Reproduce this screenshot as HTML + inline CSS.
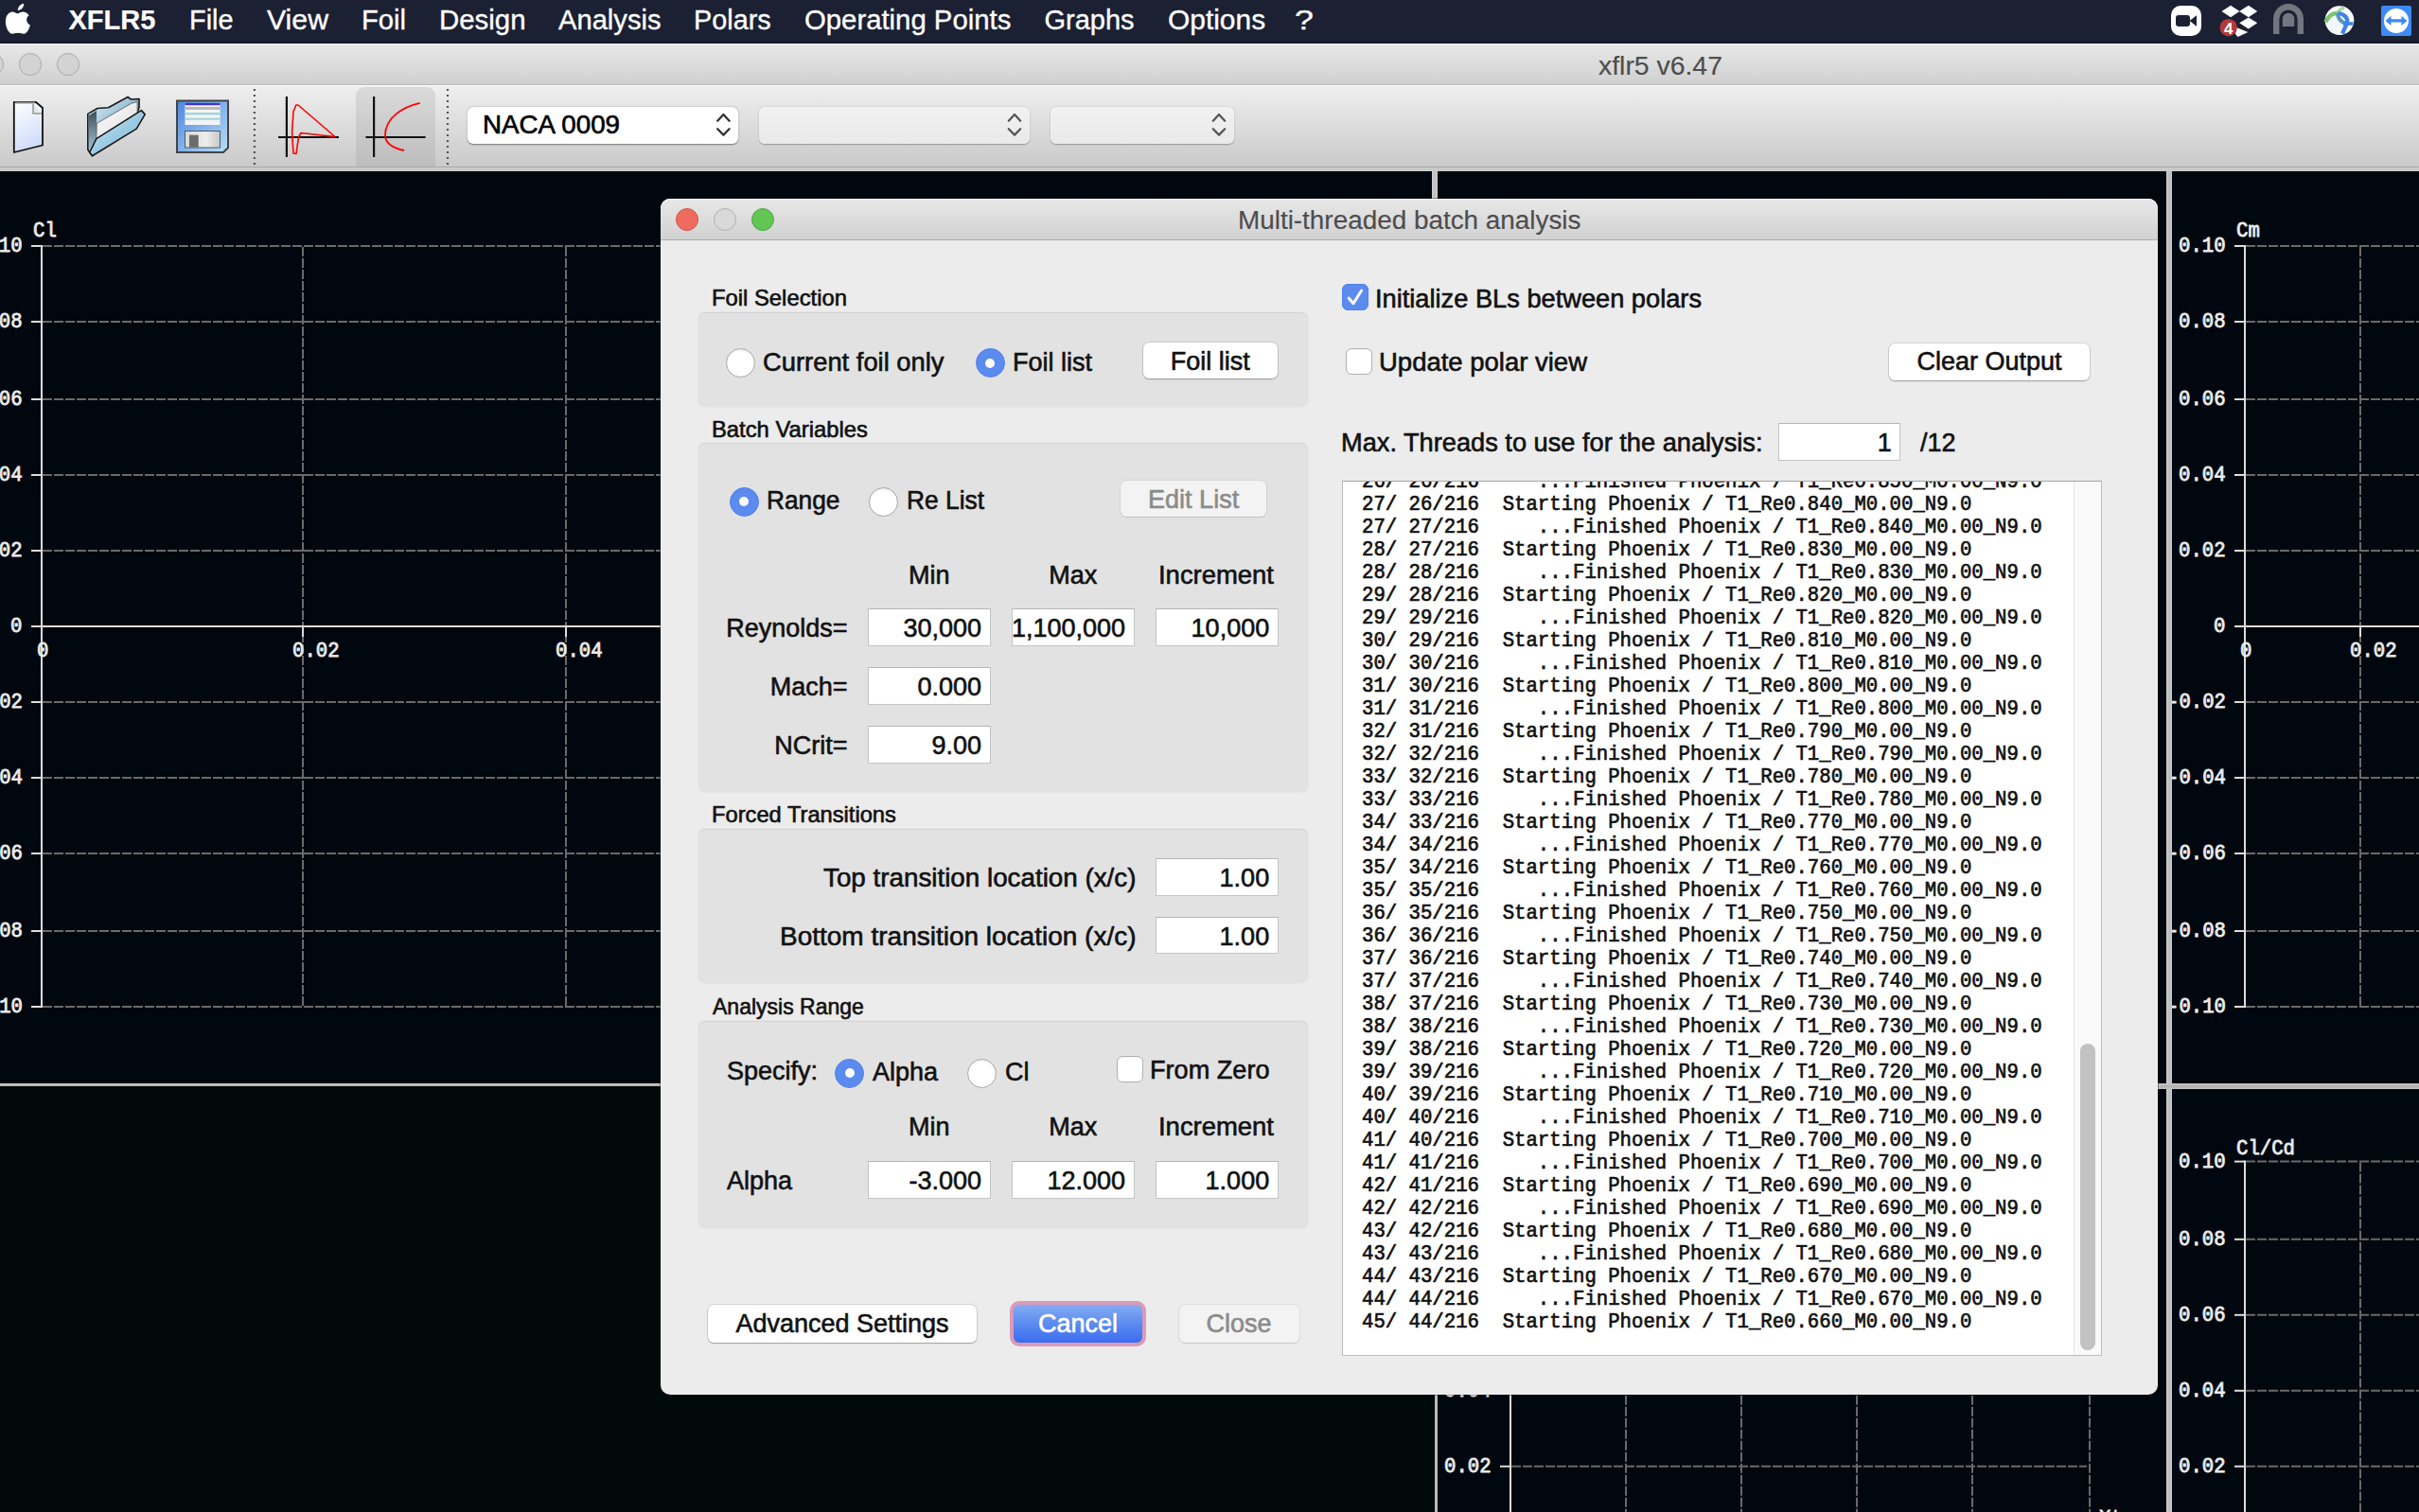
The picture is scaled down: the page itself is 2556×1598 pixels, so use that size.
<!DOCTYPE html>
<html><head><meta charset="utf-8"><title>xflr5</title>
<style>
html,body{margin:0;padding:0;}
body{width:2556px;height:1598px;overflow:hidden;position:relative;background:#01070e;font-family:"Liberation Sans",sans-serif;}
.t{position:absolute;white-space:pre;}
.r{position:absolute;box-sizing:border-box;}
svg{position:absolute;overflow:visible;}
</style></head><body>

<div class="r" style="left:0.0px;top:181.0px;width:1513.0px;height:964.0px;background:#01070e"></div>
<div class="r" style="left:1519.0px;top:181.0px;width:770.0px;height:964.0px;background:#01070e"></div>
<div class="r" style="left:2295.0px;top:181.0px;width:261.0px;height:964.0px;background:#01070e"></div>
<div class="r" style="left:0.0px;top:1148.0px;width:1516.0px;height:450.0px;background:#020909"></div>
<div class="r" style="left:1519.0px;top:1151.0px;width:770.0px;height:447.0px;background:#01070e"></div>
<div class="r" style="left:2295.0px;top:1151.0px;width:261.0px;height:447.0px;background:#01070e"></div>
<div class="r" style="left:0.0px;top:176.0px;width:2556.0px;height:5.0px;background:#c9c9c9"></div>
<div class="r" style="left:1513.0px;top:181.0px;width:6.0px;height:964.0px;background:linear-gradient(90deg,#d0d0d0,#c4c4c4 30%,#c4c4c4 70%,#d0d0d0)"></div>
<div class="r" style="left:2289.0px;top:181.0px;width:6.0px;height:1417.0px;background:linear-gradient(90deg,#d0d0d0,#c2c2c2 30%,#bdbdbd 70%,#cccccc)"></div>
<div class="r" style="left:0.0px;top:1145.0px;width:1513.0px;height:3.0px;background:linear-gradient(180deg,#d2d2d2,#b2b2b2 60%,#bababa)"></div>
<div class="r" style="left:1519.0px;top:1145.0px;width:1037.0px;height:6.0px;background:linear-gradient(180deg,#c8c8c8,#b0b0b0 50%,#c2c2c2)"></div>
<div class="r" style="left:1516.0px;top:1151.0px;width:3.0px;height:447.0px;background:linear-gradient(90deg,#a0a0a0,#c8c8c8,#a8a8a8)"></div>
<div class="r" style="left:0px;top:181px;width:1513px;height:964px;overflow:hidden">
<svg style="left:0px;top:-181px" width="2556" height="1598"><line x1="45.0" y1="260.0" x2="1513.0" y2="260.0" stroke="#6a6a6a" stroke-width="2" stroke-dasharray="10 2"/><line x1="45.0" y1="340.0" x2="1513.0" y2="340.0" stroke="#6a6a6a" stroke-width="2" stroke-dasharray="10 2"/><line x1="45.0" y1="422.0" x2="1513.0" y2="422.0" stroke="#6a6a6a" stroke-width="2" stroke-dasharray="10 2"/><line x1="45.0" y1="502.0" x2="1513.0" y2="502.0" stroke="#6a6a6a" stroke-width="2" stroke-dasharray="10 2"/><line x1="45.0" y1="582.0" x2="1513.0" y2="582.0" stroke="#6a6a6a" stroke-width="2" stroke-dasharray="10 2"/><line x1="45.0" y1="742.0" x2="1513.0" y2="742.0" stroke="#6a6a6a" stroke-width="2" stroke-dasharray="10 2"/><line x1="45.0" y1="822.0" x2="1513.0" y2="822.0" stroke="#6a6a6a" stroke-width="2" stroke-dasharray="10 2"/><line x1="45.0" y1="902.0" x2="1513.0" y2="902.0" stroke="#6a6a6a" stroke-width="2" stroke-dasharray="10 2"/><line x1="45.0" y1="984.0" x2="1513.0" y2="984.0" stroke="#6a6a6a" stroke-width="2" stroke-dasharray="10 2"/><line x1="45.0" y1="1064.0" x2="1513.0" y2="1064.0" stroke="#6a6a6a" stroke-width="2" stroke-dasharray="10 2"/><line x1="320.0" y1="261.0" x2="320.0" y2="1064.0" stroke="#6a6a6a" stroke-width="2" stroke-dasharray="10 2"/><line x1="598.0" y1="261.0" x2="598.0" y2="1064.0" stroke="#6a6a6a" stroke-width="2" stroke-dasharray="10 2"/><line x1="875.0" y1="261.0" x2="875.0" y2="1064.0" stroke="#6a6a6a" stroke-width="2" stroke-dasharray="10 2"/><line x1="1152.0" y1="261.0" x2="1152.0" y2="1064.0" stroke="#6a6a6a" stroke-width="2" stroke-dasharray="10 2"/><line x1="1429.0" y1="261.0" x2="1429.0" y2="1064.0" stroke="#6a6a6a" stroke-width="2" stroke-dasharray="10 2"/><line x1="33.0" y1="260.0" x2="44.0" y2="260.0" stroke="#dcdcdc" stroke-width="2"/><line x1="33.0" y1="340.0" x2="44.0" y2="340.0" stroke="#dcdcdc" stroke-width="2"/><line x1="33.0" y1="422.0" x2="44.0" y2="422.0" stroke="#dcdcdc" stroke-width="2"/><line x1="33.0" y1="502.0" x2="44.0" y2="502.0" stroke="#dcdcdc" stroke-width="2"/><line x1="33.0" y1="582.0" x2="44.0" y2="582.0" stroke="#dcdcdc" stroke-width="2"/><line x1="33.0" y1="662.0" x2="44.0" y2="662.0" stroke="#dcdcdc" stroke-width="2"/><line x1="33.0" y1="662.0" x2="1513.0" y2="662.0" stroke="#dcdcdc" stroke-width="2"/><line x1="320.0" y1="662.0" x2="320.0" y2="673.0" stroke="#dcdcdc" stroke-width="2"/><line x1="598.0" y1="662.0" x2="598.0" y2="673.0" stroke="#dcdcdc" stroke-width="2"/><line x1="875.0" y1="662.0" x2="875.0" y2="673.0" stroke="#dcdcdc" stroke-width="2"/><line x1="1152.0" y1="662.0" x2="1152.0" y2="673.0" stroke="#dcdcdc" stroke-width="2"/><line x1="1429.0" y1="662.0" x2="1429.0" y2="673.0" stroke="#dcdcdc" stroke-width="2"/><line x1="33.0" y1="742.0" x2="44.0" y2="742.0" stroke="#dcdcdc" stroke-width="2"/><line x1="33.0" y1="822.0" x2="44.0" y2="822.0" stroke="#dcdcdc" stroke-width="2"/><line x1="33.0" y1="902.0" x2="44.0" y2="902.0" stroke="#dcdcdc" stroke-width="2"/><line x1="33.0" y1="984.0" x2="44.0" y2="984.0" stroke="#dcdcdc" stroke-width="2"/><line x1="33.0" y1="1064.0" x2="44.0" y2="1064.0" stroke="#dcdcdc" stroke-width="2"/><line x1="44.0" y1="259.0" x2="44.0" y2="1065.0" stroke="#dcdcdc" stroke-width="2"/></svg>
<div class="t" style="left:-26.1px;top:69.3px;font-size:22.00px;line-height:22.00px;font-family:'Liberation Mono', monospace;font-weight:400;color:#ececec;-webkit-text-stroke:0.85px #ececec;transform:scaleX(0.9385);transform-origin:0 0;">0.10</div>
<div class="t" style="left:-26.1px;top:149.3px;font-size:22.00px;line-height:22.00px;font-family:'Liberation Mono', monospace;font-weight:400;color:#ececec;-webkit-text-stroke:0.85px #ececec;transform:scaleX(0.9385);transform-origin:0 0;">0.08</div>
<div class="t" style="left:-26.1px;top:231.3px;font-size:22.00px;line-height:22.00px;font-family:'Liberation Mono', monospace;font-weight:400;color:#ececec;-webkit-text-stroke:0.85px #ececec;transform:scaleX(0.9385);transform-origin:0 0;">0.06</div>
<div class="t" style="left:-26.1px;top:311.3px;font-size:22.00px;line-height:22.00px;font-family:'Liberation Mono', monospace;font-weight:400;color:#ececec;-webkit-text-stroke:0.85px #ececec;transform:scaleX(0.9385);transform-origin:0 0;">0.04</div>
<div class="t" style="left:-26.1px;top:391.3px;font-size:22.00px;line-height:22.00px;font-family:'Liberation Mono', monospace;font-weight:400;color:#ececec;-webkit-text-stroke:0.85px #ececec;transform:scaleX(0.9385);transform-origin:0 0;">0.02</div>
<div class="t" style="left:11.1px;top:471.3px;font-size:22.00px;line-height:22.00px;font-family:'Liberation Mono', monospace;font-weight:400;color:#ececec;-webkit-text-stroke:0.85px #ececec;transform:scaleX(0.9385);transform-origin:0 0;">0</div>
<div class="t" style="left:-38.5px;top:551.3px;font-size:22.00px;line-height:22.00px;font-family:'Liberation Mono', monospace;font-weight:400;color:#ececec;-webkit-text-stroke:0.85px #ececec;transform:scaleX(0.9385);transform-origin:0 0;">-0.02</div>
<div class="t" style="left:-38.5px;top:631.3px;font-size:22.00px;line-height:22.00px;font-family:'Liberation Mono', monospace;font-weight:400;color:#ececec;-webkit-text-stroke:0.85px #ececec;transform:scaleX(0.9385);transform-origin:0 0;">-0.04</div>
<div class="t" style="left:-38.5px;top:711.3px;font-size:22.00px;line-height:22.00px;font-family:'Liberation Mono', monospace;font-weight:400;color:#ececec;-webkit-text-stroke:0.85px #ececec;transform:scaleX(0.9385);transform-origin:0 0;">-0.06</div>
<div class="t" style="left:-38.5px;top:793.3px;font-size:22.00px;line-height:22.00px;font-family:'Liberation Mono', monospace;font-weight:400;color:#ececec;-webkit-text-stroke:0.85px #ececec;transform:scaleX(0.9385);transform-origin:0 0;">-0.08</div>
<div class="t" style="left:-38.5px;top:873.3px;font-size:22.00px;line-height:22.00px;font-family:'Liberation Mono', monospace;font-weight:400;color:#ececec;-webkit-text-stroke:0.85px #ececec;transform:scaleX(0.9385);transform-origin:0 0;">-0.10</div>
<div class="t" style="left:38.5px;top:496.9px;font-size:22.00px;line-height:22.00px;font-family:'Liberation Mono', monospace;font-weight:400;color:#ececec;-webkit-text-stroke:0.85px #ececec;transform:scaleX(0.9385);transform-origin:0 0;">0</div>
<div class="t" style="left:309.0px;top:496.9px;font-size:22.00px;line-height:22.00px;font-family:'Liberation Mono', monospace;font-weight:400;color:#ececec;-webkit-text-stroke:0.85px #ececec;transform:scaleX(0.9385);transform-origin:0 0;">0.02</div>
<div class="t" style="left:587.0px;top:496.9px;font-size:22.00px;line-height:22.00px;font-family:'Liberation Mono', monospace;font-weight:400;color:#ececec;-webkit-text-stroke:0.85px #ececec;transform:scaleX(0.9385);transform-origin:0 0;">0.04</div>
<div class="t" style="left:864.0px;top:496.9px;font-size:22.00px;line-height:22.00px;font-family:'Liberation Mono', monospace;font-weight:400;color:#ececec;-webkit-text-stroke:0.85px #ececec;transform:scaleX(0.9385);transform-origin:0 0;">0.06</div>
<div class="t" style="left:1141.0px;top:496.9px;font-size:22.00px;line-height:22.00px;font-family:'Liberation Mono', monospace;font-weight:400;color:#ececec;-webkit-text-stroke:0.85px #ececec;transform:scaleX(0.9385);transform-origin:0 0;">0.08</div>
<div class="t" style="left:1418.0px;top:496.9px;font-size:22.00px;line-height:22.00px;font-family:'Liberation Mono', monospace;font-weight:400;color:#ececec;-webkit-text-stroke:0.85px #ececec;transform:scaleX(0.9385);transform-origin:0 0;">0.10</div>
<div class="t" style="left:35.0px;top:52.9px;font-size:22.00px;line-height:22.00px;font-family:'Liberation Mono', monospace;font-weight:400;color:#ececec;-webkit-text-stroke:0.85px #ececec;transform:scaleX(0.9385);transform-origin:0 0;">Cl</div>
</div>
<div class="r" style="left:2295px;top:181px;width:261px;height:964px;overflow:hidden">
<svg style="left:-2295px;top:-181px" width="2556" height="1598"><line x1="2373.0" y1="260.0" x2="2556.0" y2="260.0" stroke="#6a6a6a" stroke-width="2" stroke-dasharray="10 2"/><line x1="2373.0" y1="340.0" x2="2556.0" y2="340.0" stroke="#6a6a6a" stroke-width="2" stroke-dasharray="10 2"/><line x1="2373.0" y1="422.0" x2="2556.0" y2="422.0" stroke="#6a6a6a" stroke-width="2" stroke-dasharray="10 2"/><line x1="2373.0" y1="502.0" x2="2556.0" y2="502.0" stroke="#6a6a6a" stroke-width="2" stroke-dasharray="10 2"/><line x1="2373.0" y1="582.0" x2="2556.0" y2="582.0" stroke="#6a6a6a" stroke-width="2" stroke-dasharray="10 2"/><line x1="2373.0" y1="742.0" x2="2556.0" y2="742.0" stroke="#6a6a6a" stroke-width="2" stroke-dasharray="10 2"/><line x1="2373.0" y1="822.0" x2="2556.0" y2="822.0" stroke="#6a6a6a" stroke-width="2" stroke-dasharray="10 2"/><line x1="2373.0" y1="902.0" x2="2556.0" y2="902.0" stroke="#6a6a6a" stroke-width="2" stroke-dasharray="10 2"/><line x1="2373.0" y1="984.0" x2="2556.0" y2="984.0" stroke="#6a6a6a" stroke-width="2" stroke-dasharray="10 2"/><line x1="2373.0" y1="1064.0" x2="2556.0" y2="1064.0" stroke="#6a6a6a" stroke-width="2" stroke-dasharray="10 2"/><line x1="2494.0" y1="261.0" x2="2494.0" y2="1064.0" stroke="#6a6a6a" stroke-width="2" stroke-dasharray="10 2"/><line x1="2361.0" y1="260.0" x2="2372.0" y2="260.0" stroke="#dcdcdc" stroke-width="2"/><line x1="2361.0" y1="340.0" x2="2372.0" y2="340.0" stroke="#dcdcdc" stroke-width="2"/><line x1="2361.0" y1="422.0" x2="2372.0" y2="422.0" stroke="#dcdcdc" stroke-width="2"/><line x1="2361.0" y1="502.0" x2="2372.0" y2="502.0" stroke="#dcdcdc" stroke-width="2"/><line x1="2361.0" y1="582.0" x2="2372.0" y2="582.0" stroke="#dcdcdc" stroke-width="2"/><line x1="2361.0" y1="662.0" x2="2372.0" y2="662.0" stroke="#dcdcdc" stroke-width="2"/><line x1="2361.0" y1="662.0" x2="2556.0" y2="662.0" stroke="#dcdcdc" stroke-width="2"/><line x1="2494.0" y1="662.0" x2="2494.0" y2="673.0" stroke="#dcdcdc" stroke-width="2"/><line x1="2361.0" y1="742.0" x2="2372.0" y2="742.0" stroke="#dcdcdc" stroke-width="2"/><line x1="2361.0" y1="822.0" x2="2372.0" y2="822.0" stroke="#dcdcdc" stroke-width="2"/><line x1="2361.0" y1="902.0" x2="2372.0" y2="902.0" stroke="#dcdcdc" stroke-width="2"/><line x1="2361.0" y1="984.0" x2="2372.0" y2="984.0" stroke="#dcdcdc" stroke-width="2"/><line x1="2361.0" y1="1064.0" x2="2372.0" y2="1064.0" stroke="#dcdcdc" stroke-width="2"/><line x1="2372.0" y1="259.0" x2="2372.0" y2="1065.0" stroke="#dcdcdc" stroke-width="2"/></svg>
<div class="t" style="left:6.9px;top:69.3px;font-size:22.00px;line-height:22.00px;font-family:'Liberation Mono', monospace;font-weight:400;color:#ececec;-webkit-text-stroke:0.85px #ececec;transform:scaleX(0.9385);transform-origin:0 0;">0.10</div>
<div class="t" style="left:6.9px;top:149.3px;font-size:22.00px;line-height:22.00px;font-family:'Liberation Mono', monospace;font-weight:400;color:#ececec;-webkit-text-stroke:0.85px #ececec;transform:scaleX(0.9385);transform-origin:0 0;">0.08</div>
<div class="t" style="left:6.9px;top:231.3px;font-size:22.00px;line-height:22.00px;font-family:'Liberation Mono', monospace;font-weight:400;color:#ececec;-webkit-text-stroke:0.85px #ececec;transform:scaleX(0.9385);transform-origin:0 0;">0.06</div>
<div class="t" style="left:6.9px;top:311.3px;font-size:22.00px;line-height:22.00px;font-family:'Liberation Mono', monospace;font-weight:400;color:#ececec;-webkit-text-stroke:0.85px #ececec;transform:scaleX(0.9385);transform-origin:0 0;">0.04</div>
<div class="t" style="left:6.9px;top:391.3px;font-size:22.00px;line-height:22.00px;font-family:'Liberation Mono', monospace;font-weight:400;color:#ececec;-webkit-text-stroke:0.85px #ececec;transform:scaleX(0.9385);transform-origin:0 0;">0.02</div>
<div class="t" style="left:44.1px;top:471.3px;font-size:22.00px;line-height:22.00px;font-family:'Liberation Mono', monospace;font-weight:400;color:#ececec;-webkit-text-stroke:0.85px #ececec;transform:scaleX(0.9385);transform-origin:0 0;">0</div>
<div class="t" style="left:-5.5px;top:551.3px;font-size:22.00px;line-height:22.00px;font-family:'Liberation Mono', monospace;font-weight:400;color:#ececec;-webkit-text-stroke:0.85px #ececec;transform:scaleX(0.9385);transform-origin:0 0;">-0.02</div>
<div class="t" style="left:-5.5px;top:631.3px;font-size:22.00px;line-height:22.00px;font-family:'Liberation Mono', monospace;font-weight:400;color:#ececec;-webkit-text-stroke:0.85px #ececec;transform:scaleX(0.9385);transform-origin:0 0;">-0.04</div>
<div class="t" style="left:-5.5px;top:711.3px;font-size:22.00px;line-height:22.00px;font-family:'Liberation Mono', monospace;font-weight:400;color:#ececec;-webkit-text-stroke:0.85px #ececec;transform:scaleX(0.9385);transform-origin:0 0;">-0.06</div>
<div class="t" style="left:-5.5px;top:793.3px;font-size:22.00px;line-height:22.00px;font-family:'Liberation Mono', monospace;font-weight:400;color:#ececec;-webkit-text-stroke:0.85px #ececec;transform:scaleX(0.9385);transform-origin:0 0;">-0.08</div>
<div class="t" style="left:-5.5px;top:873.3px;font-size:22.00px;line-height:22.00px;font-family:'Liberation Mono', monospace;font-weight:400;color:#ececec;-webkit-text-stroke:0.85px #ececec;transform:scaleX(0.9385);transform-origin:0 0;">-0.10</div>
<div class="t" style="left:71.5px;top:496.9px;font-size:22.00px;line-height:22.00px;font-family:'Liberation Mono', monospace;font-weight:400;color:#ececec;-webkit-text-stroke:0.85px #ececec;transform:scaleX(0.9385);transform-origin:0 0;">0</div>
<div class="t" style="left:188.0px;top:496.9px;font-size:22.00px;line-height:22.00px;font-family:'Liberation Mono', monospace;font-weight:400;color:#ececec;-webkit-text-stroke:0.85px #ececec;transform:scaleX(0.9385);transform-origin:0 0;">0.02</div>
<div class="t" style="left:68.0px;top:52.9px;font-size:22.00px;line-height:22.00px;font-family:'Liberation Mono', monospace;font-weight:400;color:#ececec;-webkit-text-stroke:0.85px #ececec;transform:scaleX(0.9385);transform-origin:0 0;">Cm</div>
</div>
<div class="r" style="left:2295px;top:1151px;width:261px;height:447px;overflow:hidden">
<svg style="left:-2295px;top:-1151px" width="2556" height="1598"><line x1="2373.0" y1="1227.6" x2="2556.0" y2="1227.6" stroke="#6a6a6a" stroke-width="2" stroke-dasharray="10 2"/><line x1="2373.0" y1="1309.8" x2="2556.0" y2="1309.8" stroke="#6a6a6a" stroke-width="2" stroke-dasharray="10 2"/><line x1="2373.0" y1="1389.8" x2="2556.0" y2="1389.8" stroke="#6a6a6a" stroke-width="2" stroke-dasharray="10 2"/><line x1="2373.0" y1="1469.8" x2="2556.0" y2="1469.8" stroke="#6a6a6a" stroke-width="2" stroke-dasharray="10 2"/><line x1="2373.0" y1="1549.8" x2="2556.0" y2="1549.8" stroke="#6a6a6a" stroke-width="2" stroke-dasharray="10 2"/><line x1="2494.0" y1="1228.6" x2="2494.0" y2="1640.0" stroke="#6a6a6a" stroke-width="2" stroke-dasharray="10 2"/><line x1="2361.0" y1="1227.6" x2="2372.0" y2="1227.6" stroke="#dcdcdc" stroke-width="2"/><line x1="2361.0" y1="1309.8" x2="2372.0" y2="1309.8" stroke="#dcdcdc" stroke-width="2"/><line x1="2361.0" y1="1389.8" x2="2372.0" y2="1389.8" stroke="#dcdcdc" stroke-width="2"/><line x1="2361.0" y1="1469.8" x2="2372.0" y2="1469.8" stroke="#dcdcdc" stroke-width="2"/><line x1="2361.0" y1="1549.8" x2="2372.0" y2="1549.8" stroke="#dcdcdc" stroke-width="2"/><line x1="2372.0" y1="1226.6" x2="2372.0" y2="1641.0" stroke="#dcdcdc" stroke-width="2"/></svg>
<div class="t" style="left:6.9px;top:66.9px;font-size:22.00px;line-height:22.00px;font-family:'Liberation Mono', monospace;font-weight:400;color:#ececec;-webkit-text-stroke:0.85px #ececec;transform:scaleX(0.9385);transform-origin:0 0;">0.10</div>
<div class="t" style="left:6.9px;top:149.1px;font-size:22.00px;line-height:22.00px;font-family:'Liberation Mono', monospace;font-weight:400;color:#ececec;-webkit-text-stroke:0.85px #ececec;transform:scaleX(0.9385);transform-origin:0 0;">0.08</div>
<div class="t" style="left:6.9px;top:229.1px;font-size:22.00px;line-height:22.00px;font-family:'Liberation Mono', monospace;font-weight:400;color:#ececec;-webkit-text-stroke:0.85px #ececec;transform:scaleX(0.9385);transform-origin:0 0;">0.06</div>
<div class="t" style="left:6.9px;top:309.1px;font-size:22.00px;line-height:22.00px;font-family:'Liberation Mono', monospace;font-weight:400;color:#ececec;-webkit-text-stroke:0.85px #ececec;transform:scaleX(0.9385);transform-origin:0 0;">0.04</div>
<div class="t" style="left:6.9px;top:389.1px;font-size:22.00px;line-height:22.00px;font-family:'Liberation Mono', monospace;font-weight:400;color:#ececec;-webkit-text-stroke:0.85px #ececec;transform:scaleX(0.9385);transform-origin:0 0;">0.02</div>
<div class="t" style="left:68.0px;top:53.4px;font-size:22.00px;line-height:22.00px;font-family:'Liberation Mono', monospace;font-weight:400;color:#ececec;-webkit-text-stroke:0.85px #ececec;transform:scaleX(0.9385);transform-origin:0 0;">Cl/Cd</div>
</div>
<div class="r" style="left:1519px;top:1151px;width:770px;height:447px;overflow:hidden">
<svg style="left:-1519px;top:-1151px" width="2556" height="1598"><line x1="1597.0" y1="1389.8" x2="2205.0" y2="1389.8" stroke="#6a6a6a" stroke-width="2" stroke-dasharray="10 2"/><line x1="1597.0" y1="1469.8" x2="2205.0" y2="1469.8" stroke="#6a6a6a" stroke-width="2" stroke-dasharray="10 2"/><line x1="1597.0" y1="1549.8" x2="2205.0" y2="1549.8" stroke="#6a6a6a" stroke-width="2" stroke-dasharray="10 2"/><line x1="1718.0" y1="1390.8" x2="1718.0" y2="1640.0" stroke="#6a6a6a" stroke-width="2" stroke-dasharray="10 2"/><line x1="1840.0" y1="1390.8" x2="1840.0" y2="1640.0" stroke="#6a6a6a" stroke-width="2" stroke-dasharray="10 2"/><line x1="1962.0" y1="1390.8" x2="1962.0" y2="1640.0" stroke="#6a6a6a" stroke-width="2" stroke-dasharray="10 2"/><line x1="2084.0" y1="1390.8" x2="2084.0" y2="1640.0" stroke="#6a6a6a" stroke-width="2" stroke-dasharray="10 2"/><line x1="2208.0" y1="1390.8" x2="2208.0" y2="1640.0" stroke="#6a6a6a" stroke-width="2" stroke-dasharray="10 2"/><line x1="1585.0" y1="1389.8" x2="1596.0" y2="1389.8" stroke="#dcdcdc" stroke-width="2"/><line x1="1585.0" y1="1469.8" x2="1596.0" y2="1469.8" stroke="#dcdcdc" stroke-width="2"/><line x1="1585.0" y1="1549.8" x2="1596.0" y2="1549.8" stroke="#dcdcdc" stroke-width="2"/><line x1="1596.0" y1="1388.8" x2="1596.0" y2="1641.0" stroke="#dcdcdc" stroke-width="2"/></svg>
<div class="t" style="left:6.9px;top:229.1px;font-size:22.00px;line-height:22.00px;font-family:'Liberation Mono', monospace;font-weight:400;color:#ececec;-webkit-text-stroke:0.85px #ececec;transform:scaleX(0.9385);transform-origin:0 0;">0.06</div>
<div class="t" style="left:6.9px;top:309.1px;font-size:22.00px;line-height:22.00px;font-family:'Liberation Mono', monospace;font-weight:400;color:#ececec;-webkit-text-stroke:0.85px #ececec;transform:scaleX(0.9385);transform-origin:0 0;">0.04</div>
<div class="t" style="left:6.9px;top:389.1px;font-size:22.00px;line-height:22.00px;font-family:'Liberation Mono', monospace;font-weight:400;color:#ececec;-webkit-text-stroke:0.85px #ececec;transform:scaleX(0.9385);transform-origin:0 0;">0.02</div>
</div>
<div class="t" style="left:2218.0px;top:1595.4px;font-size:22.00px;line-height:22.00px;font-family:'Liberation Mono', monospace;font-weight:400;color:#ececec;-webkit-text-stroke:0.85px #ececec;transform:scaleX(0.9385);transform-origin:0 0;">Xtr</div>
<div class="r" style="left:0.0px;top:0.0px;width:2556.0px;height:45.0px;background:#1b2033"></div>
<div class="r" style="left:0.0px;top:45.0px;width:2556.0px;height:1.0px;background:#0c0f18"></div>
<div class="t" style="left:72.5px;top:7.4px;font-size:29.00px;line-height:29.00px;font-family:'Liberation Sans', sans-serif;font-weight:700;color:#ffffff;-webkit-text-stroke:0.20px #ffffff;">XFLR5</div>
<div class="t" style="left:200.3px;top:7.4px;font-size:29.00px;line-height:29.00px;font-family:'Liberation Sans', sans-serif;font-weight:400;color:#ffffff;-webkit-text-stroke:0.35px #ffffff;transform:scaleX(0.9951);transform-origin:0 0;">File</div>
<div class="t" style="left:281.9px;top:7.4px;font-size:29.00px;line-height:29.00px;font-family:'Liberation Sans', sans-serif;font-weight:400;color:#ffffff;-webkit-text-stroke:0.35px #ffffff;transform:scaleX(1.0427);transform-origin:0 0;">View</div>
<div class="t" style="left:381.5px;top:7.4px;font-size:29.00px;line-height:29.00px;font-family:'Liberation Sans', sans-serif;font-weight:400;color:#ffffff;-webkit-text-stroke:0.35px #ffffff;transform:scaleX(1.0058);transform-origin:0 0;">Foil</div>
<div class="t" style="left:463.5px;top:7.4px;font-size:29.00px;line-height:29.00px;font-family:'Liberation Sans', sans-serif;font-weight:400;color:#ffffff;-webkit-text-stroke:0.35px #ffffff;transform:scaleX(1.0136);transform-origin:0 0;">Design</div>
<div class="t" style="left:589.5px;top:7.4px;font-size:29.00px;line-height:29.00px;font-family:'Liberation Sans', sans-serif;font-weight:400;color:#ffffff;-webkit-text-stroke:0.35px #ffffff;transform:scaleX(1.0047);transform-origin:0 0;">Analysis</div>
<div class="t" style="left:733.3px;top:7.4px;font-size:29.00px;line-height:29.00px;font-family:'Liberation Sans', sans-serif;font-weight:400;color:#ffffff;-webkit-text-stroke:0.35px #ffffff;transform:scaleX(0.9939);transform-origin:0 0;">Polars</div>
<div class="t" style="left:850.2px;top:7.4px;font-size:29.00px;line-height:29.00px;font-family:'Liberation Sans', sans-serif;font-weight:400;color:#ffffff;-webkit-text-stroke:0.35px #ffffff;transform:scaleX(1.0106);transform-origin:0 0;">Operating Points</div>
<div class="t" style="left:1103.5px;top:7.4px;font-size:29.00px;line-height:29.00px;font-family:'Liberation Sans', sans-serif;font-weight:400;color:#ffffff;-webkit-text-stroke:0.35px #ffffff;">Graphs</div>
<div class="t" style="left:1233.9px;top:7.4px;font-size:29.00px;line-height:29.00px;font-family:'Liberation Sans', sans-serif;font-weight:400;color:#ffffff;-webkit-text-stroke:0.35px #ffffff;transform:scaleX(1.0316);transform-origin:0 0;">Options</div>
<div class="t" style="left:1368.1px;top:7.4px;font-size:29.00px;line-height:29.00px;font-family:'Liberation Sans', sans-serif;font-weight:400;color:#ffffff;-webkit-text-stroke:0.35px #ffffff;transform:scaleX(1.2338);transform-origin:0 0;">?</div>
<div class="r" style="left:0.0px;top:46.0px;width:2556.0px;height:44.0px;background:linear-gradient(180deg,#e8e8e8 0%,#cfcfcf 100%);box-shadow:inset 0 1px 0 rgba(255,255,255,0.85)"></div>
<div class="r" style="left:0.0px;top:89.0px;width:2556.0px;height:1.0px;background:#b9b9b9"></div>
<div class="t" style="left:1689.0px;top:55.6px;font-size:27.70px;line-height:27.70px;font-family:'Liberation Sans', sans-serif;font-weight:400;color:#4d4d4d;-webkit-text-stroke:0.15px #4d4d4d;transform:scaleX(1.0251);transform-origin:0 0;">xflr5 v6.47</div>
<div class="r" style="left:0.0px;top:90.0px;width:2556.0px;height:86.0px;background:linear-gradient(180deg,#efefef 0%,#cacaca 100%)"></div>
<div class="r" style="left:0.0px;top:175.6px;width:2556.0px;height:1.2px;background:#a9a9a9"></div>
<div class="r" style="left:494.0px;top:112.5px;width:286.0px;height:39.0px;background:#fff;border-radius:6px;box-shadow:0 0.5px 1.5px rgba(0,0,0,0.45)"></div>
<div class="t" style="left:509.8px;top:119.3px;font-size:27.00px;line-height:27.00px;font-family:'Liberation Sans', sans-serif;font-weight:400;color:#000;-webkit-text-stroke:0.60px #000;transform:scaleX(1.0277);transform-origin:0 0;">NACA 0009</div>
<div class="r" style="left:802.0px;top:112.5px;width:286.0px;height:39.0px;background:linear-gradient(180deg,#f2f2f2,#e9e9e9);border-radius:6px;box-shadow:0 0.5px 1.5px rgba(0,0,0,0.30)"></div>
<div class="r" style="left:1109.5px;top:112.5px;width:194.5px;height:39.0px;background:linear-gradient(180deg,#f2f2f2,#e9e9e9);border-radius:6px;box-shadow:0 0.5px 1.5px rgba(0,0,0,0.30)"></div>
<svg style="left:0;top:0" width="60" height="46"><path fill="#fff" d="M19 14.4 C21 13.2 24.3 11.7 27.3 13.2 C28.8 14 29.8 15 30.6 16.2 C27.4 18.2 26.8 23.6 31.9 26.6 C31 30.2 28.4 35.6 25.4 35.8 C23.4 35.9 22 34.8 19 34.8 C16 34.8 14.6 35.9 12.6 35.8 C9 35.5 5.9 28.3 5.9 22.8 C5.9 16.3 9.6 12.6 13.2 12.6 C15.6 12.6 17 14.4 19 14.4 Z M18.8 11 C18.8 7.5 21.5 4.2 25.3 3.7 C25.3 7.5 22.5 10.8 18.8 11 Z"/></svg>
<div class="r" style="left:-20.0px;top:56.1px;width:23.6px;height:23.6px;border-radius:50%;background:#d3d3d3;border:1px solid #a9a9a9"></div>
<div class="r" style="left:20.0px;top:56.1px;width:23.6px;height:23.6px;border-radius:50%;background:#d3d3d3;border:1px solid #a9a9a9"></div>
<div class="r" style="left:60.0px;top:56.1px;width:23.6px;height:23.6px;border-radius:50%;background:#d3d3d3;border:1px solid #a9a9a9"></div>
<svg style="left:0;top:0" width="1" height="1"><path d="M758.2 127.7 L764.4 121 L770.6 127.7 M758.2 136.3 L764.4 142.6 L770.6 136.3" fill="none" stroke="#333" stroke-width="2.3" stroke-linecap="round" stroke-linejoin="round"/></svg>
<svg style="left:0;top:0" width="1" height="1"><path d="M1065.8 127.7 L1072.0 121 L1078.2 127.7 M1065.8 136.3 L1072.0 142.6 L1078.2 136.3" fill="none" stroke="#555" stroke-width="2.3" stroke-linecap="round" stroke-linejoin="round"/></svg>
<svg style="left:0;top:0" width="1" height="1"><path d="M1281.8 127.7 L1288.0 121 L1294.2 127.7 M1281.8 136.3 L1288.0 142.6 L1294.2 136.3" fill="none" stroke="#555" stroke-width="2.3" stroke-linecap="round" stroke-linejoin="round"/></svg>
<div class="r" style="left:0.0px;top:90.0px;width:2556.0px;height:1.2px;background:rgba(255,255,255,0.8)"></div>
<div class="r" style="left:376.0px;top:92.0px;width:84.0px;height:84.0px;background:linear-gradient(180deg,#dadada,#bdbdbd);border-radius:9px 9px 0 0"></div>
<svg style="left:0;top:0" width="1" height="1"><line x1="268.9" y1="94" x2="268.9" y2="175" stroke="#555" stroke-width="2.2" stroke-dasharray="2 4"/></svg>
<svg style="left:0;top:0" width="1" height="1"><line x1="473.0" y1="94" x2="473.0" y2="175" stroke="#555" stroke-width="2.2" stroke-dasharray="2 4"/></svg>
<svg style="left:0;top:0" width="1" height="1"><defs><linearGradient id="gdoc" x1="0" y1="0" x2="0.3" y2="1"><stop offset="0" stop-color="#ffffff"/><stop offset="1" stop-color="#cfdcfa"/></linearGradient></defs><path d="M14.8 108 L38 108 L45 114 L45 153.5 L14.8 161 Z" fill="url(#gdoc)" stroke="#111" stroke-width="1.8" stroke-linejoin="round"/><path d="M35 110 L35 120 L44 120" fill="#e6e6e6" stroke="#9a9a9a" stroke-width="1.6"/><path d="M15.5 108.5 L37 108.5" stroke="#888" stroke-width="2"/></svg>
<svg style="left:0;top:0" width="1" height="1"><defs><linearGradient id="gfb" x1="0" y1="0" x2="1" y2="1"><stop offset="0" stop-color="#d8f0fb"/><stop offset="0.45" stop-color="#9ec3d6"/><stop offset="1" stop-color="#3c5866"/></linearGradient><linearGradient id="gfls" x1="0" y1="0" x2="0" y2="1"><stop offset="0" stop-color="#3d4f5a"/><stop offset="1" stop-color="#a9cde0"/></linearGradient><linearGradient id="gpp" x1="0" y1="0" x2="1" y2="1"><stop offset="0" stop-color="#ffffff"/><stop offset="1" stop-color="#dcdcdc"/></linearGradient><linearGradient id="gff" x1="0" y1="0" x2="1" y2="1"><stop offset="0" stop-color="#d8f3ff"/><stop offset="0.5" stop-color="#9ccbe2"/><stop offset="1" stop-color="#86b9d2"/></linearGradient></defs><path d="M92.8 120.4 L103 114.5 L114.5 113.8 L135 102.5 L138.5 105 L147 104.5 L147 113.7 L145 119.4 L102 146.6 L97.5 164.7 L94.7 161 L92.8 158 Z" fill="url(#gfb)" stroke="#1a1a1a" stroke-width="1.6" stroke-linejoin="round"/><path d="M94 122 L102 117 L102 150 L97 162 L94 158 Z" fill="url(#gfls)"/><path d="M102.3 130.4 L138.5 109.4 L145.1 107.5 L145.1 119.4 L101.8 146.6 Z" fill="url(#gpp)" stroke="#555" stroke-width="0.8"/><path d="M101.8 146.6 L149.4 116.6 L153.2 120.9 L144.2 136.1 L97.5 164.7 L94.7 161 Z" fill="url(#gff)" stroke="#1a1a1a" stroke-width="1.6" stroke-linejoin="round"/></svg>
<svg style="left:0;top:0" width="1" height="1"><defs><linearGradient id="gfl" x1="0" y1="0" x2="1" y2="1"><stop offset="0" stop-color="#4d86de"/><stop offset="1" stop-color="#b8ddf6"/></linearGradient><linearGradient id="gsh" x1="0" y1="0" x2="1" y2="0"><stop offset="0" stop-color="#d8d8d8"/><stop offset="0.6" stop-color="#ededed"/><stop offset="1" stop-color="#c8c8c8"/></linearGradient></defs><path d="M187 106.5 L241 106.5 L241 156 L236 161 L187 161 Z" fill="url(#gfl)" stroke="#444" stroke-width="2"/><rect x="195.5" y="109" width="37" height="23" fill="#f4f4f4"/><rect x="195.5" y="109" width="37" height="2.2" fill="#3f2fd6"/><rect x="196" y="113" width="36" height="3" fill="#b9b9b9"/><rect x="196" y="119" width="36" height="2.4" fill="#9fd6d6"/><rect x="196" y="124.5" width="36" height="2.4" fill="#a9d9d9"/><rect x="195.5" y="138.5" width="37" height="17.5" fill="url(#gsh)" stroke="#4e5a66" stroke-width="1"/><rect x="200" y="142.7" width="9.7" height="13" fill="#6c6c6c"/></svg>
<svg style="left:0;top:0" width="1" height="1"><line x1="302.9" y1="102" x2="302.9" y2="166" stroke="#111" stroke-width="2.2"/><line x1="294" y1="145" x2="358" y2="145" stroke="#111" stroke-width="2.2"/><path d="M354 144.5 L318 140.5 L315.5 145 L313 162.5 L310 162 L308.6 140 L310 118 L312.8 111 L315 111 L354 144.5" fill="none" stroke="#f00" stroke-width="1.6" stroke-linejoin="round"/></svg>
<svg style="left:0;top:0" width="1" height="1"><line x1="395.1" y1="102" x2="395.1" y2="166" stroke="#111" stroke-width="2.2"/><line x1="386.4" y1="145" x2="449.6" y2="145" stroke="#111" stroke-width="2.2"/><path d="M443.7 108.9 C426 113 407 124 407 143 C407 151 413 156 427 159" fill="none" stroke="#f00" stroke-width="1.8"/></svg>
<div class="r" style="left:2294.0px;top:6.0px;width:32.2px;height:32.0px;background:#fff;border-radius:10px"></div>
<div class="r" style="left:2299.0px;top:16.0px;width:15.2px;height:12.2px;background:#1b2033;border-radius:3px"></div>
<svg style="left:0;top:0" width="1" height="1"><path d="M2313.5 22 L2321 16.2 L2321 27.8 Z" fill="#1b2033"/></svg>
<svg style="left:0;top:0" width="1" height="1"><g fill="#fff"><path d="M2347.5 12 L2357 5.8 L2366.5 12 L2357 18.2 Z"/><path d="M2366.2 12 L2375.8 5.8 L2385.2 12 L2375.8 18.2 Z"/><path d="M2366.2 24.2 L2375.8 18.4 L2385.2 24.2 L2375.8 30.4 Z"/><path d="M2363 29 L2375.3 34 L2364.5 39 L2362 36 Z"/></g><circle cx="2354.7" cy="29.1" r="9.2" fill="#b23a3a"/></svg>
<div class="t" style="left:2350.0px;top:22.0px;font-size:17.00px;line-height:17.00px;font-family:'Liberation Sans', sans-serif;font-weight:700;color:#fff;">4</div>
<svg style="left:0;top:0" width="1" height="1"><path d="M2402 36 L2402 20 A16 16 0 0 1 2434 20 L2434 36 L2427.6 36 L2427.6 20 A9.6 9.6 0 0 0 2408.4 20 L2408.4 36 Z" fill="#72767f"/><path d="M2411.8 28 L2411.8 20 A6.25 6.25 0 0 1 2424.3 20 L2424.3 28 Z" fill="#72767f"/></svg>
<svg style="left:0;top:0" width="1" height="1"><defs><radialGradient id="ggl" cx="0.4" cy="0.6" r="0.7"><stop offset="0" stop-color="#eef6fc"/><stop offset="1" stop-color="#ffffff"/></radialGradient><linearGradient id="grb" x1="0" y1="0" x2="1" y2="1"><stop offset="0" stop-color="#6cbc5c"/><stop offset="0.45" stop-color="#8cc6a8"/><stop offset="0.7" stop-color="#4a8ad0"/><stop offset="1" stop-color="#3f84e6"/></linearGradient></defs><circle cx="2472" cy="21.6" r="15.3" fill="url(#ggl)"/><path d="M2457.5 23.5 C2460 17 2465 13.8 2470.5 13.8" fill="none" stroke="#7cc46c" stroke-width="4.4"/><path d="M2469.5 14.5 C2471 11 2474 9 2477 8" fill="none" stroke="#a8d8a0" stroke-width="3.6"/><path d="M2470 13.8 C2470 19 2473.5 23.5 2478.5 24.8" fill="none" stroke="#5a98c0" stroke-width="4.2"/><path d="M2470.5 14 C2477 14.5 2481.5 19.5 2480 24 C2478.5 28.5 2476.5 31.5 2475.2 35.5" fill="none" stroke="#3f84e0" stroke-width="4.2"/><path d="M2476 25 L2486.5 25" fill="none" stroke="#3f84e6" stroke-width="3.6"/></svg>
<div class="r" style="left:2516.0px;top:6.0px;width:32.0px;height:32.0px;background:#3d8af7;border-radius:2px"></div>
<div class="r" style="left:2518.8px;top:8.7px;width:26.4px;height:26.4px;background:#fff;border-radius:50%"></div>
<svg style="left:0;top:0" width="1" height="1"><path d="M2520.5 21.9 L2526.5 16.8 L2526.5 20.2 L2537.5 20.2 L2537.5 16.8 L2543.5 21.9 L2537.5 27 L2537.5 23.6 L2526.5 23.6 L2526.5 27 Z" fill="#3d8af7"/></svg>
<div class="r" style="left:698.0px;top:210.0px;width:1582.0px;height:1264.0px;background:#ececec;border-radius:10px;box-shadow:0 0 0 1px rgba(0,0,0,0.35)"></div>
<div class="r" style="left:698.0px;top:210.0px;width:1582.0px;height:44.0px;background:linear-gradient(180deg,#e8e8e8,#d1d1d1);border-radius:10px 10px 0 0;border-bottom:1px solid #adadad;box-shadow:inset 0 1px 0 rgba(255,255,255,0.6)"></div>
<div class="t" style="left:1307.5px;top:219.9px;font-size:27.00px;line-height:27.00px;font-family:'Liberation Sans', sans-serif;font-weight:400;color:#4d4d4d;-webkit-text-stroke:0.15px #4d4d4d;transform:scaleX(1.0322);transform-origin:0 0;">Multi-threaded batch analysis</div>
<div class="r" style="left:713.9px;top:219.8px;width:24.0px;height:24.0px;border-radius:50%;background:#ee6b60;border:1px solid #d5534a"></div>
<div class="r" style="left:754.0px;top:219.8px;width:24.0px;height:24.0px;border-radius:50%;background:#d9d9d9;border:1px solid #b0b0b0"></div>
<div class="r" style="left:794.0px;top:219.8px;width:24.0px;height:24.0px;border-radius:50%;background:#62c655;border:1px solid #4fa845"></div>
<div class="r" style="left:738.0px;top:330.0px;width:644.0px;height:100.0px;background:#e2e2e2;border-radius:7px;box-shadow:inset 0 1px 0 rgba(0,0,0,0.06), 0 0 0 0.5px rgba(0,0,0,0.05)"></div>
<div class="r" style="left:738.0px;top:468.0px;width:644.0px;height:369.0px;background:#e2e2e2;border-radius:7px;box-shadow:inset 0 1px 0 rgba(0,0,0,0.06), 0 0 0 0.5px rgba(0,0,0,0.05)"></div>
<div class="r" style="left:738.0px;top:876.0px;width:644.0px;height:163.0px;background:#e2e2e2;border-radius:7px;box-shadow:inset 0 1px 0 rgba(0,0,0,0.06), 0 0 0 0.5px rgba(0,0,0,0.05)"></div>
<div class="r" style="left:738.0px;top:1078.5px;width:644.0px;height:219.0px;background:#e2e2e2;border-radius:7px;box-shadow:inset 0 1px 0 rgba(0,0,0,0.06), 0 0 0 0.5px rgba(0,0,0,0.05)"></div>
<div class="t" style="left:752.0px;top:304.3px;font-size:23.20px;line-height:23.20px;font-family:'Liberation Sans', sans-serif;font-weight:400;color:#111;-webkit-text-stroke:0.60px #111;transform:scaleX(1.0268);transform-origin:0 0;">Foil Selection</div>
<div class="t" style="left:751.5px;top:442.7px;font-size:23.20px;line-height:23.20px;font-family:'Liberation Sans', sans-serif;font-weight:400;color:#111;-webkit-text-stroke:0.60px #111;transform:scaleX(1.0263);transform-origin:0 0;">Batch Variables</div>
<div class="t" style="left:751.5px;top:850.0px;font-size:23.20px;line-height:23.20px;font-family:'Liberation Sans', sans-serif;font-weight:400;color:#111;-webkit-text-stroke:0.60px #111;transform:scaleX(1.0218);transform-origin:0 0;">Forced Transitions</div>
<div class="t" style="left:752.5px;top:1052.8px;font-size:23.20px;line-height:23.20px;font-family:'Liberation Sans', sans-serif;font-weight:400;color:#111;-webkit-text-stroke:0.60px #111;transform:scaleX(0.9925);transform-origin:0 0;">Analysis Range</div>
<div class="r" style="left:766.5px;top:368.2px;width:31.0px;height:31.0px;border-radius:50%;background:#fff;border:1px solid #a7a7a7;box-shadow:inset 0 2px 2px rgba(0,0,0,0.06)"></div>
<div class="t" style="left:806.0px;top:370.4px;font-size:27.00px;line-height:27.00px;font-family:'Liberation Sans', sans-serif;font-weight:400;color:#111;-webkit-text-stroke:0.60px #111;transform:scaleX(1.0128);transform-origin:0 0;">Current foil only</div>
<div class="r" style="left:1030.5px;top:368.2px;width:31.0px;height:31.0px;border-radius:50%;background:#5b8bef;border:1px solid #4f80ec"></div>
<div class="r" style="left:1040.8px;top:378.5px;width:10.4px;height:10.4px;border-radius:50%;background:#fff"></div>
<div class="t" style="left:1070.0px;top:370.4px;font-size:27.00px;line-height:27.00px;font-family:'Liberation Sans', sans-serif;font-weight:400;color:#111;-webkit-text-stroke:0.60px #111;">Foil list</div>
<div class="r" style="left:1207.5px;top:361.7px;width:142.7px;height:38.8px;border-radius:6px;background:#fff;box-shadow:0 0 0 0.5px rgba(0,0,0,0.20), 0 1px 1.5px rgba(0,0,0,0.25)"></div>
<div class="t" style="left:1236.8px;top:368.5px;font-size:27.00px;line-height:27.00px;font-family:'Liberation Sans', sans-serif;font-weight:400;color:#111;-webkit-text-stroke:0.60px #111;">Foil list</div>
<div class="r" style="left:770.5px;top:514.5px;width:31.0px;height:31.0px;border-radius:50%;background:#5b8bef;border:1px solid #4f80ec"></div>
<div class="r" style="left:780.8px;top:524.8px;width:10.4px;height:10.4px;border-radius:50%;background:#fff"></div>
<div class="t" style="left:810.0px;top:516.4px;font-size:27.00px;line-height:27.00px;font-family:'Liberation Sans', sans-serif;font-weight:400;color:#111;-webkit-text-stroke:0.60px #111;transform:scaleX(0.9740);transform-origin:0 0;">Range</div>
<div class="r" style="left:918.3px;top:514.5px;width:31.0px;height:31.0px;border-radius:50%;background:#fff;border:1px solid #a7a7a7;box-shadow:inset 0 2px 2px rgba(0,0,0,0.06)"></div>
<div class="t" style="left:958.0px;top:516.4px;font-size:27.00px;line-height:27.00px;font-family:'Liberation Sans', sans-serif;font-weight:400;color:#111;-webkit-text-stroke:0.60px #111;transform:scaleX(0.9758);transform-origin:0 0;">Re List</div>
<div class="r" style="left:1183.7px;top:507.7px;width:154.8px;height:38.3px;border-radius:6px;background:#f3f3f3;box-shadow:0 0 0 0.5px rgba(0,0,0,0.12), 0 1px 1px rgba(0,0,0,0.10)"></div>
<div class="t" style="left:1213.1px;top:514.5px;font-size:27.00px;line-height:27.00px;font-family:'Liberation Sans', sans-serif;font-weight:400;color:#8b8b8b;-webkit-text-stroke:0.60px #8b8b8b;">Edit List</div>
<div class="t" style="left:960.0px;top:594.6px;font-size:27.00px;line-height:27.00px;font-family:'Liberation Sans', sans-serif;font-weight:400;color:#111;-webkit-text-stroke:0.60px #111;">Min</div>
<div class="t" style="left:1108.3px;top:594.6px;font-size:27.00px;line-height:27.00px;font-family:'Liberation Sans', sans-serif;font-weight:400;color:#111;-webkit-text-stroke:0.60px #111;">Max</div>
<div class="t" style="left:1224.3px;top:594.6px;font-size:27.00px;line-height:27.00px;font-family:'Liberation Sans', sans-serif;font-weight:400;color:#111;-webkit-text-stroke:0.60px #111;transform:scaleX(1.0162);transform-origin:0 0;">Increment</div>
<div class="t" style="left:767.2px;top:650.8px;font-size:27.00px;line-height:27.00px;font-family:'Liberation Sans', sans-serif;font-weight:400;color:#111;-webkit-text-stroke:0.60px #111;">Reynolds=</div>
<div class="r" style="left:917.0px;top:643.0px;width:129.5px;height:40.0px;background:#fff;border:1px solid #c4c4c4;border-top-color:#b5b5b5"></div>
<div class="t" style="left:954.4px;top:650.6px;font-size:27.00px;line-height:27.00px;font-family:'Liberation Sans', sans-serif;font-weight:400;color:#111;-webkit-text-stroke:0.60px #111;">30,000</div>
<div class="r" style="left:1069.0px;top:643.0px;width:129.5px;height:40.0px;background:#fff;border:1px solid #c4c4c4;border-top-color:#b5b5b5"></div>
<div class="t" style="left:1068.9px;top:650.6px;font-size:27.00px;line-height:27.00px;font-family:'Liberation Sans', sans-serif;font-weight:400;color:#111;-webkit-text-stroke:0.60px #111;">1,100,000</div>
<div class="r" style="left:1221.0px;top:643.0px;width:129.7px;height:40.0px;background:#fff;border:1px solid #c4c4c4;border-top-color:#b5b5b5"></div>
<div class="t" style="left:1258.6px;top:650.6px;font-size:27.00px;line-height:27.00px;font-family:'Liberation Sans', sans-serif;font-weight:400;color:#111;-webkit-text-stroke:0.60px #111;">10,000</div>
<div class="t" style="left:813.7px;top:712.7px;font-size:27.00px;line-height:27.00px;font-family:'Liberation Sans', sans-serif;font-weight:400;color:#111;-webkit-text-stroke:0.60px #111;">Mach=</div>
<div class="r" style="left:917.0px;top:705.2px;width:129.5px;height:39.8px;background:#fff;border:1px solid #c4c4c4;border-top-color:#b5b5b5"></div>
<div class="t" style="left:969.4px;top:712.7px;font-size:27.00px;line-height:27.00px;font-family:'Liberation Sans', sans-serif;font-weight:400;color:#111;-webkit-text-stroke:0.60px #111;">0.000</div>
<div class="t" style="left:818.2px;top:774.9px;font-size:27.00px;line-height:27.00px;font-family:'Liberation Sans', sans-serif;font-weight:400;color:#111;-webkit-text-stroke:0.60px #111;">NCrit=</div>
<div class="r" style="left:917.0px;top:767.2px;width:129.5px;height:39.4px;background:#fff;border:1px solid #c4c4c4;border-top-color:#b5b5b5"></div>
<div class="t" style="left:984.4px;top:774.9px;font-size:27.00px;line-height:27.00px;font-family:'Liberation Sans', sans-serif;font-weight:400;color:#111;-webkit-text-stroke:0.60px #111;">9.00</div>
<div class="t" style="left:869.5px;top:915.0px;font-size:27.00px;line-height:27.00px;font-family:'Liberation Sans', sans-serif;font-weight:400;color:#111;-webkit-text-stroke:0.60px #111;transform:scaleX(1.0291);transform-origin:0 0;">Top transition location (x/c)</div>
<div class="r" style="left:1221.0px;top:907.2px;width:129.7px;height:39.4px;background:#fff;border:1px solid #c4c4c4;border-top-color:#b5b5b5"></div>
<div class="t" style="left:1288.6px;top:915.0px;font-size:27.00px;line-height:27.00px;font-family:'Liberation Sans', sans-serif;font-weight:400;color:#111;-webkit-text-stroke:0.60px #111;">1.00</div>
<div class="t" style="left:823.5px;top:976.9px;font-size:27.00px;line-height:27.00px;font-family:'Liberation Sans', sans-serif;font-weight:400;color:#111;-webkit-text-stroke:0.60px #111;transform:scaleX(1.0368);transform-origin:0 0;">Bottom transition location (x/c)</div>
<div class="r" style="left:1221.0px;top:969.2px;width:129.7px;height:39.3px;background:#fff;border:1px solid #c4c4c4;border-top-color:#b5b5b5"></div>
<div class="t" style="left:1288.6px;top:976.9px;font-size:27.00px;line-height:27.00px;font-family:'Liberation Sans', sans-serif;font-weight:400;color:#111;-webkit-text-stroke:0.60px #111;">1.00</div>
<div class="t" style="left:768.0px;top:1119.1px;font-size:27.00px;line-height:27.00px;font-family:'Liberation Sans', sans-serif;font-weight:400;color:#111;-webkit-text-stroke:0.60px #111;">Specify:</div>
<div class="r" style="left:882.3px;top:1118.6px;width:31.0px;height:31.0px;border-radius:50%;background:#5b8bef;border:1px solid #4f80ec"></div>
<div class="r" style="left:892.6px;top:1128.9px;width:10.4px;height:10.4px;border-radius:50%;background:#fff"></div>
<div class="t" style="left:922.0px;top:1120.4px;font-size:27.00px;line-height:27.00px;font-family:'Liberation Sans', sans-serif;font-weight:400;color:#111;-webkit-text-stroke:0.60px #111;">Alpha</div>
<div class="r" style="left:1022.3px;top:1118.6px;width:31.0px;height:31.0px;border-radius:50%;background:#fff;border:1px solid #a7a7a7;box-shadow:inset 0 2px 2px rgba(0,0,0,0.06)"></div>
<div class="t" style="left:1062.0px;top:1120.4px;font-size:27.00px;line-height:27.00px;font-family:'Liberation Sans', sans-serif;font-weight:400;color:#111;-webkit-text-stroke:0.60px #111;">Cl</div>
<div class="r" style="left:1180.0px;top:1116.2px;width:28.0px;height:28.0px;border-radius:6px;background:#fff;border:1px solid #b0b0b0;box-shadow:inset 0 1px 1px rgba(0,0,0,0.05)"></div>
<div class="t" style="left:1215.0px;top:1117.7px;font-size:27.00px;line-height:27.00px;font-family:'Liberation Sans', sans-serif;font-weight:400;color:#111;-webkit-text-stroke:0.60px #111;transform:scaleX(1.0039);transform-origin:0 0;">From Zero</div>
<div class="t" style="left:960.0px;top:1177.7px;font-size:27.00px;line-height:27.00px;font-family:'Liberation Sans', sans-serif;font-weight:400;color:#111;-webkit-text-stroke:0.60px #111;">Min</div>
<div class="t" style="left:1108.3px;top:1177.7px;font-size:27.00px;line-height:27.00px;font-family:'Liberation Sans', sans-serif;font-weight:400;color:#111;-webkit-text-stroke:0.60px #111;">Max</div>
<div class="t" style="left:1224.3px;top:1177.7px;font-size:27.00px;line-height:27.00px;font-family:'Liberation Sans', sans-serif;font-weight:400;color:#111;-webkit-text-stroke:0.60px #111;transform:scaleX(1.0162);transform-origin:0 0;">Increment</div>
<div class="t" style="left:768.0px;top:1235.1px;font-size:27.00px;line-height:27.00px;font-family:'Liberation Sans', sans-serif;font-weight:400;color:#111;-webkit-text-stroke:0.60px #111;">Alpha</div>
<div class="r" style="left:917.0px;top:1227.0px;width:129.5px;height:39.7px;background:#fff;border:1px solid #c4c4c4;border-top-color:#b5b5b5"></div>
<div class="t" style="left:960.4px;top:1235.1px;font-size:27.00px;line-height:27.00px;font-family:'Liberation Sans', sans-serif;font-weight:400;color:#111;-webkit-text-stroke:0.60px #111;">-3.000</div>
<div class="r" style="left:1069.0px;top:1227.0px;width:129.5px;height:39.7px;background:#fff;border:1px solid #c4c4c4;border-top-color:#b5b5b5"></div>
<div class="t" style="left:1106.4px;top:1235.1px;font-size:27.00px;line-height:27.00px;font-family:'Liberation Sans', sans-serif;font-weight:400;color:#111;-webkit-text-stroke:0.60px #111;">12.000</div>
<div class="r" style="left:1221.0px;top:1227.0px;width:129.7px;height:39.7px;background:#fff;border:1px solid #c4c4c4;border-top-color:#b5b5b5"></div>
<div class="t" style="left:1273.6px;top:1235.1px;font-size:27.00px;line-height:27.00px;font-family:'Liberation Sans', sans-serif;font-weight:400;color:#111;-webkit-text-stroke:0.60px #111;">1.000</div>
<div class="r" style="left:747.6px;top:1379.3px;width:284.8px;height:39.3px;border-radius:6px;background:#fff;box-shadow:0 0 0 0.5px rgba(0,0,0,0.20), 0 1px 1.5px rgba(0,0,0,0.25)"></div>
<div class="t" style="left:777.4px;top:1385.7px;font-size:27.00px;line-height:27.00px;font-family:'Liberation Sans', sans-serif;font-weight:400;color:#111;-webkit-text-stroke:0.60px #111;">Advanced Settings</div>
<div class="r" style="left:1067.0px;top:1375.0px;width:144.0px;height:48.0px;border-radius:10px;background:#d99bb9"></div>
<div class="r" style="left:1071.0px;top:1378.7px;width:135.8px;height:40.2px;border-radius:6px;background:linear-gradient(180deg,#85abf2 0%,#5f8ff0 45%,#3a6cf0 100%)"></div>
<div class="t" style="left:1096.9px;top:1385.7px;font-size:27.00px;line-height:27.00px;font-family:'Liberation Sans', sans-serif;font-weight:400;color:#fff;-webkit-text-stroke:0.60px #fff;">Cancel</div>
<div class="r" style="left:1245.5px;top:1379.3px;width:127.1px;height:39.3px;border-radius:6px;background:#f3f3f3;box-shadow:0 0 0 0.5px rgba(0,0,0,0.12), 0 1px 1px rgba(0,0,0,0.10)"></div>
<div class="t" style="left:1274.5px;top:1385.7px;font-size:27.00px;line-height:27.00px;font-family:'Liberation Sans', sans-serif;font-weight:400;color:#8b8b8b;-webkit-text-stroke:0.60px #8b8b8b;">Close</div>
<div class="r" style="left:1418.0px;top:300.0px;width:28.0px;height:28.0px;border-radius:6px;background:#5b8bef;border:1px solid #4f80ec"></div>
<svg style="left:1418.0px;top:300.0px" width="28" height="28"><path d="M7.2 15.2 L12 20.8 L20.5 7.2" fill="none" stroke="#fff" stroke-width="3" stroke-linecap="round" stroke-linejoin="round"/></svg>
<div class="t" style="left:1453.0px;top:302.5px;font-size:27.00px;line-height:27.00px;font-family:'Liberation Sans', sans-serif;font-weight:400;color:#111;-webkit-text-stroke:0.60px #111;transform:scaleX(1.0082);transform-origin:0 0;">Initialize BLs between polars</div>
<div class="r" style="left:1422.0px;top:368.0px;width:28.0px;height:28.0px;border-radius:6px;background:#fff;border:1px solid #b0b0b0;box-shadow:inset 0 1px 1px rgba(0,0,0,0.05)"></div>
<div class="t" style="left:1456.5px;top:369.9px;font-size:27.00px;line-height:27.00px;font-family:'Liberation Sans', sans-serif;font-weight:400;color:#111;-webkit-text-stroke:0.60px #111;transform:scaleX(1.0179);transform-origin:0 0;">Update polar view</div>
<div class="r" style="left:1995.5px;top:363.3px;width:212.8px;height:38.9px;border-radius:6px;background:#fff;box-shadow:0 0 0 0.5px rgba(0,0,0,0.20), 0 1px 1.5px rgba(0,0,0,0.25)"></div>
<div class="t" style="left:2025.4px;top:369.2px;font-size:27.00px;line-height:27.00px;font-family:'Liberation Sans', sans-serif;font-weight:400;color:#111;-webkit-text-stroke:0.60px #111;">Clear Output</div>
<div class="t" style="left:1417.0px;top:455.0px;font-size:27.00px;line-height:27.00px;font-family:'Liberation Sans', sans-serif;font-weight:400;color:#111;-webkit-text-stroke:0.60px #111;transform:scaleX(1.0074);transform-origin:0 0;">Max. Threads to use for the analysis:</div>
<div class="r" style="left:1879.2px;top:447.4px;width:129.1px;height:39.2px;background:#fff;border:1px solid #c4c4c4;border-top-color:#b5b5b5"></div>
<div class="t" style="left:1983.8px;top:455.0px;font-size:27.00px;line-height:27.00px;font-family:'Liberation Sans', sans-serif;font-weight:400;color:#111;-webkit-text-stroke:0.60px #111;">1</div>
<div class="t" style="left:2029.0px;top:455.0px;font-size:27.00px;line-height:27.00px;font-family:'Liberation Sans', sans-serif;font-weight:400;color:#111;-webkit-text-stroke:0.60px #111;">/12</div>
<div class="r" style="left:1418.0px;top:508.0px;width:803.0px;height:925.0px;background:#fff;border:1px solid #bdbdbd;border-top-color:#a5a5a5"></div>
<div class="r" style="left:2190.5px;top:509.0px;width:29.5px;height:923.0px;background:#f9f9f9;border-left:1px solid #e4e4e4"></div>
<div class="r" style="left:2198.0px;top:1102.5px;width:16.0px;height:324.1px;background:#c2c2c2;border-radius:8px"></div>
<div class="r" style="left:1419px;top:509px;width:771px;height:923px;overflow:hidden">
<div class="t" style="left:19.5px;top:-11.2px;font-size:22.50px;line-height:22.50px;font-family:'Liberation Mono', monospace;font-weight:400;color:#111;-webkit-text-stroke:0.70px #111;transform:scaleX(0.9177);transform-origin:0 0;">26/ 26/216     ...Finished Phoenix / T1_Re0.850_M0.00_N9.0</div>
<div class="t" style="left:19.5px;top:12.8px;font-size:22.50px;line-height:22.50px;font-family:'Liberation Mono', monospace;font-weight:400;color:#111;-webkit-text-stroke:0.70px #111;transform:scaleX(0.9177);transform-origin:0 0;">27/ 26/216  Starting Phoenix / T1_Re0.840_M0.00_N9.0</div>
<div class="t" style="left:19.5px;top:36.8px;font-size:22.50px;line-height:22.50px;font-family:'Liberation Mono', monospace;font-weight:400;color:#111;-webkit-text-stroke:0.70px #111;transform:scaleX(0.9177);transform-origin:0 0;">27/ 27/216     ...Finished Phoenix / T1_Re0.840_M0.00_N9.0</div>
<div class="t" style="left:19.5px;top:60.8px;font-size:22.50px;line-height:22.50px;font-family:'Liberation Mono', monospace;font-weight:400;color:#111;-webkit-text-stroke:0.70px #111;transform:scaleX(0.9177);transform-origin:0 0;">28/ 27/216  Starting Phoenix / T1_Re0.830_M0.00_N9.0</div>
<div class="t" style="left:19.5px;top:84.8px;font-size:22.50px;line-height:22.50px;font-family:'Liberation Mono', monospace;font-weight:400;color:#111;-webkit-text-stroke:0.70px #111;transform:scaleX(0.9177);transform-origin:0 0;">28/ 28/216     ...Finished Phoenix / T1_Re0.830_M0.00_N9.0</div>
<div class="t" style="left:19.5px;top:108.8px;font-size:22.50px;line-height:22.50px;font-family:'Liberation Mono', monospace;font-weight:400;color:#111;-webkit-text-stroke:0.70px #111;transform:scaleX(0.9177);transform-origin:0 0;">29/ 28/216  Starting Phoenix / T1_Re0.820_M0.00_N9.0</div>
<div class="t" style="left:19.5px;top:132.8px;font-size:22.50px;line-height:22.50px;font-family:'Liberation Mono', monospace;font-weight:400;color:#111;-webkit-text-stroke:0.70px #111;transform:scaleX(0.9177);transform-origin:0 0;">29/ 29/216     ...Finished Phoenix / T1_Re0.820_M0.00_N9.0</div>
<div class="t" style="left:19.5px;top:156.8px;font-size:22.50px;line-height:22.50px;font-family:'Liberation Mono', monospace;font-weight:400;color:#111;-webkit-text-stroke:0.70px #111;transform:scaleX(0.9177);transform-origin:0 0;">30/ 29/216  Starting Phoenix / T1_Re0.810_M0.00_N9.0</div>
<div class="t" style="left:19.5px;top:180.8px;font-size:22.50px;line-height:22.50px;font-family:'Liberation Mono', monospace;font-weight:400;color:#111;-webkit-text-stroke:0.70px #111;transform:scaleX(0.9177);transform-origin:0 0;">30/ 30/216     ...Finished Phoenix / T1_Re0.810_M0.00_N9.0</div>
<div class="t" style="left:19.5px;top:204.8px;font-size:22.50px;line-height:22.50px;font-family:'Liberation Mono', monospace;font-weight:400;color:#111;-webkit-text-stroke:0.70px #111;transform:scaleX(0.9177);transform-origin:0 0;">31/ 30/216  Starting Phoenix / T1_Re0.800_M0.00_N9.0</div>
<div class="t" style="left:19.5px;top:228.8px;font-size:22.50px;line-height:22.50px;font-family:'Liberation Mono', monospace;font-weight:400;color:#111;-webkit-text-stroke:0.70px #111;transform:scaleX(0.9177);transform-origin:0 0;">31/ 31/216     ...Finished Phoenix / T1_Re0.800_M0.00_N9.0</div>
<div class="t" style="left:19.5px;top:252.8px;font-size:22.50px;line-height:22.50px;font-family:'Liberation Mono', monospace;font-weight:400;color:#111;-webkit-text-stroke:0.70px #111;transform:scaleX(0.9177);transform-origin:0 0;">32/ 31/216  Starting Phoenix / T1_Re0.790_M0.00_N9.0</div>
<div class="t" style="left:19.5px;top:276.8px;font-size:22.50px;line-height:22.50px;font-family:'Liberation Mono', monospace;font-weight:400;color:#111;-webkit-text-stroke:0.70px #111;transform:scaleX(0.9177);transform-origin:0 0;">32/ 32/216     ...Finished Phoenix / T1_Re0.790_M0.00_N9.0</div>
<div class="t" style="left:19.5px;top:300.8px;font-size:22.50px;line-height:22.50px;font-family:'Liberation Mono', monospace;font-weight:400;color:#111;-webkit-text-stroke:0.70px #111;transform:scaleX(0.9177);transform-origin:0 0;">33/ 32/216  Starting Phoenix / T1_Re0.780_M0.00_N9.0</div>
<div class="t" style="left:19.5px;top:324.8px;font-size:22.50px;line-height:22.50px;font-family:'Liberation Mono', monospace;font-weight:400;color:#111;-webkit-text-stroke:0.70px #111;transform:scaleX(0.9177);transform-origin:0 0;">33/ 33/216     ...Finished Phoenix / T1_Re0.780_M0.00_N9.0</div>
<div class="t" style="left:19.5px;top:348.8px;font-size:22.50px;line-height:22.50px;font-family:'Liberation Mono', monospace;font-weight:400;color:#111;-webkit-text-stroke:0.70px #111;transform:scaleX(0.9177);transform-origin:0 0;">34/ 33/216  Starting Phoenix / T1_Re0.770_M0.00_N9.0</div>
<div class="t" style="left:19.5px;top:372.8px;font-size:22.50px;line-height:22.50px;font-family:'Liberation Mono', monospace;font-weight:400;color:#111;-webkit-text-stroke:0.70px #111;transform:scaleX(0.9177);transform-origin:0 0;">34/ 34/216     ...Finished Phoenix / T1_Re0.770_M0.00_N9.0</div>
<div class="t" style="left:19.5px;top:396.8px;font-size:22.50px;line-height:22.50px;font-family:'Liberation Mono', monospace;font-weight:400;color:#111;-webkit-text-stroke:0.70px #111;transform:scaleX(0.9177);transform-origin:0 0;">35/ 34/216  Starting Phoenix / T1_Re0.760_M0.00_N9.0</div>
<div class="t" style="left:19.5px;top:420.8px;font-size:22.50px;line-height:22.50px;font-family:'Liberation Mono', monospace;font-weight:400;color:#111;-webkit-text-stroke:0.70px #111;transform:scaleX(0.9177);transform-origin:0 0;">35/ 35/216     ...Finished Phoenix / T1_Re0.760_M0.00_N9.0</div>
<div class="t" style="left:19.5px;top:444.8px;font-size:22.50px;line-height:22.50px;font-family:'Liberation Mono', monospace;font-weight:400;color:#111;-webkit-text-stroke:0.70px #111;transform:scaleX(0.9177);transform-origin:0 0;">36/ 35/216  Starting Phoenix / T1_Re0.750_M0.00_N9.0</div>
<div class="t" style="left:19.5px;top:468.8px;font-size:22.50px;line-height:22.50px;font-family:'Liberation Mono', monospace;font-weight:400;color:#111;-webkit-text-stroke:0.70px #111;transform:scaleX(0.9177);transform-origin:0 0;">36/ 36/216     ...Finished Phoenix / T1_Re0.750_M0.00_N9.0</div>
<div class="t" style="left:19.5px;top:492.8px;font-size:22.50px;line-height:22.50px;font-family:'Liberation Mono', monospace;font-weight:400;color:#111;-webkit-text-stroke:0.70px #111;transform:scaleX(0.9177);transform-origin:0 0;">37/ 36/216  Starting Phoenix / T1_Re0.740_M0.00_N9.0</div>
<div class="t" style="left:19.5px;top:516.8px;font-size:22.50px;line-height:22.50px;font-family:'Liberation Mono', monospace;font-weight:400;color:#111;-webkit-text-stroke:0.70px #111;transform:scaleX(0.9177);transform-origin:0 0;">37/ 37/216     ...Finished Phoenix / T1_Re0.740_M0.00_N9.0</div>
<div class="t" style="left:19.5px;top:540.8px;font-size:22.50px;line-height:22.50px;font-family:'Liberation Mono', monospace;font-weight:400;color:#111;-webkit-text-stroke:0.70px #111;transform:scaleX(0.9177);transform-origin:0 0;">38/ 37/216  Starting Phoenix / T1_Re0.730_M0.00_N9.0</div>
<div class="t" style="left:19.5px;top:564.8px;font-size:22.50px;line-height:22.50px;font-family:'Liberation Mono', monospace;font-weight:400;color:#111;-webkit-text-stroke:0.70px #111;transform:scaleX(0.9177);transform-origin:0 0;">38/ 38/216     ...Finished Phoenix / T1_Re0.730_M0.00_N9.0</div>
<div class="t" style="left:19.5px;top:588.8px;font-size:22.50px;line-height:22.50px;font-family:'Liberation Mono', monospace;font-weight:400;color:#111;-webkit-text-stroke:0.70px #111;transform:scaleX(0.9177);transform-origin:0 0;">39/ 38/216  Starting Phoenix / T1_Re0.720_M0.00_N9.0</div>
<div class="t" style="left:19.5px;top:612.8px;font-size:22.50px;line-height:22.50px;font-family:'Liberation Mono', monospace;font-weight:400;color:#111;-webkit-text-stroke:0.70px #111;transform:scaleX(0.9177);transform-origin:0 0;">39/ 39/216     ...Finished Phoenix / T1_Re0.720_M0.00_N9.0</div>
<div class="t" style="left:19.5px;top:636.8px;font-size:22.50px;line-height:22.50px;font-family:'Liberation Mono', monospace;font-weight:400;color:#111;-webkit-text-stroke:0.70px #111;transform:scaleX(0.9177);transform-origin:0 0;">40/ 39/216  Starting Phoenix / T1_Re0.710_M0.00_N9.0</div>
<div class="t" style="left:19.5px;top:660.8px;font-size:22.50px;line-height:22.50px;font-family:'Liberation Mono', monospace;font-weight:400;color:#111;-webkit-text-stroke:0.70px #111;transform:scaleX(0.9177);transform-origin:0 0;">40/ 40/216     ...Finished Phoenix / T1_Re0.710_M0.00_N9.0</div>
<div class="t" style="left:19.5px;top:684.8px;font-size:22.50px;line-height:22.50px;font-family:'Liberation Mono', monospace;font-weight:400;color:#111;-webkit-text-stroke:0.70px #111;transform:scaleX(0.9177);transform-origin:0 0;">41/ 40/216  Starting Phoenix / T1_Re0.700_M0.00_N9.0</div>
<div class="t" style="left:19.5px;top:708.8px;font-size:22.50px;line-height:22.50px;font-family:'Liberation Mono', monospace;font-weight:400;color:#111;-webkit-text-stroke:0.70px #111;transform:scaleX(0.9177);transform-origin:0 0;">41/ 41/216     ...Finished Phoenix / T1_Re0.700_M0.00_N9.0</div>
<div class="t" style="left:19.5px;top:732.8px;font-size:22.50px;line-height:22.50px;font-family:'Liberation Mono', monospace;font-weight:400;color:#111;-webkit-text-stroke:0.70px #111;transform:scaleX(0.9177);transform-origin:0 0;">42/ 41/216  Starting Phoenix / T1_Re0.690_M0.00_N9.0</div>
<div class="t" style="left:19.5px;top:756.8px;font-size:22.50px;line-height:22.50px;font-family:'Liberation Mono', monospace;font-weight:400;color:#111;-webkit-text-stroke:0.70px #111;transform:scaleX(0.9177);transform-origin:0 0;">42/ 42/216     ...Finished Phoenix / T1_Re0.690_M0.00_N9.0</div>
<div class="t" style="left:19.5px;top:780.8px;font-size:22.50px;line-height:22.50px;font-family:'Liberation Mono', monospace;font-weight:400;color:#111;-webkit-text-stroke:0.70px #111;transform:scaleX(0.9177);transform-origin:0 0;">43/ 42/216  Starting Phoenix / T1_Re0.680_M0.00_N9.0</div>
<div class="t" style="left:19.5px;top:804.8px;font-size:22.50px;line-height:22.50px;font-family:'Liberation Mono', monospace;font-weight:400;color:#111;-webkit-text-stroke:0.70px #111;transform:scaleX(0.9177);transform-origin:0 0;">43/ 43/216     ...Finished Phoenix / T1_Re0.680_M0.00_N9.0</div>
<div class="t" style="left:19.5px;top:828.8px;font-size:22.50px;line-height:22.50px;font-family:'Liberation Mono', monospace;font-weight:400;color:#111;-webkit-text-stroke:0.70px #111;transform:scaleX(0.9177);transform-origin:0 0;">44/ 43/216  Starting Phoenix / T1_Re0.670_M0.00_N9.0</div>
<div class="t" style="left:19.5px;top:852.8px;font-size:22.50px;line-height:22.50px;font-family:'Liberation Mono', monospace;font-weight:400;color:#111;-webkit-text-stroke:0.70px #111;transform:scaleX(0.9177);transform-origin:0 0;">44/ 44/216     ...Finished Phoenix / T1_Re0.670_M0.00_N9.0</div>
<div class="t" style="left:19.5px;top:876.8px;font-size:22.50px;line-height:22.50px;font-family:'Liberation Mono', monospace;font-weight:400;color:#111;-webkit-text-stroke:0.70px #111;transform:scaleX(0.9177);transform-origin:0 0;">45/ 44/216  Starting Phoenix / T1_Re0.660_M0.00_N9.0</div>
</div>
</body></html>
